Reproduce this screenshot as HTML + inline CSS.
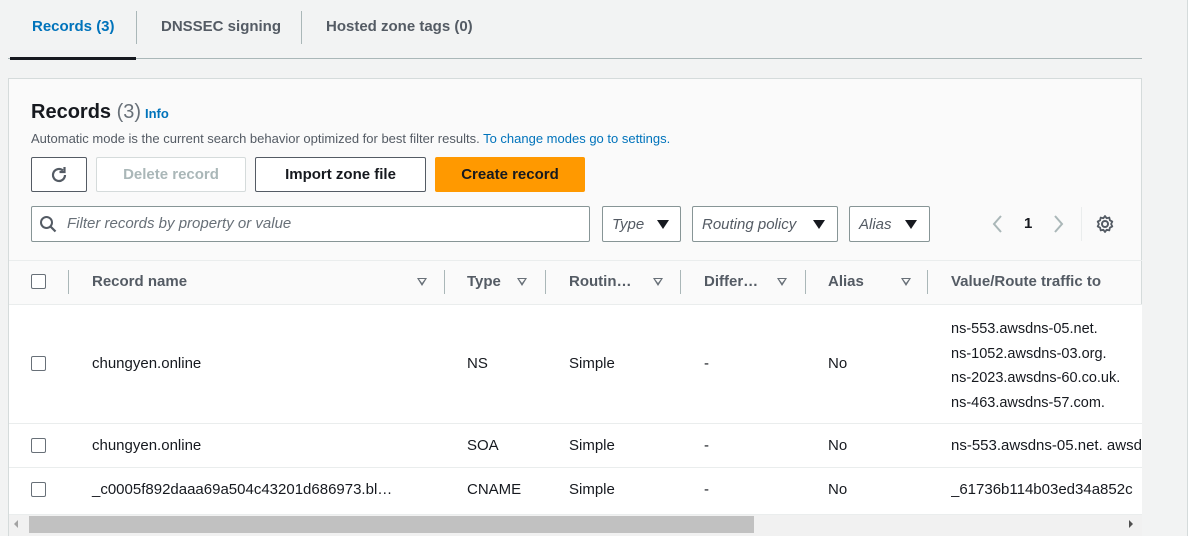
<!DOCTYPE html>
<html><head><style>
*{box-sizing:border-box;margin:0;padding:0}
body{width:1192px;height:536px;overflow:hidden;background:#f2f3f3;font-family:"Liberation Sans",sans-serif;position:relative;color:#16191f}
.a{position:absolute;white-space:nowrap}
.tab{font-size:15px;font-weight:bold;color:#545b64;top:18px}
.btn{position:absolute;top:157px;height:35px;border:1px solid #545b64;border-radius:2px;font-size:15px;font-weight:bold;display:flex;align-items:center;justify-content:center;background:#fff}
.sel{position:absolute;top:206px;height:36px;border:1px solid #879596;border-radius:2px;background:#fff;font-size:15px;font-style:italic;color:#545b64;display:flex;align-items:center;padding-left:9px}
.tri{position:absolute;width:0;height:0;border-left:6px solid transparent;border-right:6px solid transparent;border-top:9px solid #16191f}
.th{position:absolute;top:273px;font-size:15px;font-weight:bold;color:#545b64;white-space:nowrap}
.htri{position:absolute;top:278px;width:0;height:0;border-left:5px solid transparent;border-right:5px solid transparent;border-top:8px solid #687078}
.htri:after{content:"";position:absolute;left:-3px;top:-7px;border-left:3px solid transparent;border-right:3px solid transparent;border-top:4px solid #fafafa}
.sep{position:absolute;top:270px;width:1px;height:24px;background:#aab7b8}
.cb{position:absolute;left:31px;width:15px;height:15px;border:1px solid #687078;border-radius:2px;background:#fff}
.td{position:absolute;font-size:15px;color:#16191f;white-space:nowrap}
.hl{position:absolute;left:9px;width:1133px;height:1px;background:#eaeded}
</style></head><body>
<div class="a tab" style="left:32px;color:#0073bb">Records (3)</div>
<div class="a" style="left:136px;top:11px;width:1px;height:33px;background:#aab7b8"></div>
<div class="a tab" style="left:161px">DNSSEC signing</div>
<div class="a" style="left:301px;top:11px;width:1px;height:33px;background:#aab7b8"></div>
<div class="a tab" style="left:326px">Hosted zone tags (0)</div>
<div class="a" style="left:8px;top:58px;width:1134px;height:1px;background:#aab7b8"></div>
<div class="a" style="left:10px;top:57px;width:126px;height:3px;background:#16191f"></div>

<div class="a" style="left:8px;top:78px;width:1134px;height:458px;background:#fafafa;border:1px solid #d5dbdb;border-bottom:none"></div>
<div class="a" style="left:31px;top:101px;font-size:20px;font-weight:bold">Records <span style="font-weight:normal;color:#687078">(3)</span></div>
<div class="a" style="left:145px;top:106px;font-size:13px;font-weight:bold;color:#0073bb">Info</div>
<div class="a" style="left:31px;top:131px;font-size:13px;color:#545b64">Automatic mode is the current search behavior optimized for best filter results. <span style="color:#0073bb">To change modes go to settings.</span></div>

<div class="btn" style="left:31px;width:56px"><svg width="20" height="20" viewBox="0 0 20 20"><path d="M16 10a6 6 0 1 1-2-4.5" fill="none" stroke="#545b64" stroke-width="2.2"/><path d="M15.5 2v5h-5" fill="none" stroke="#545b64" stroke-width="2.2"/></svg></div>
<div class="btn" style="left:96px;width:150px;border-color:#d5dbdb;color:#aab7b8">Delete record</div>
<div class="btn" style="left:255px;width:171px;color:#16191f">Import zone file</div>
<div class="btn" style="left:435px;width:150px;background:#ff9900;border-color:#ff9900;color:#16191f">Create record</div>

<div class="a" style="left:31px;top:206px;width:559px;height:36px;border:1px solid #879596;border-radius:2px;background:#fff"></div>
<svg class="a" style="left:39px;top:215px" width="18" height="18" viewBox="0 0 18 18"><circle cx="7.5" cy="7.5" r="5.5" fill="none" stroke="#545b64" stroke-width="2"/><path d="M11.5 11.5l5 5" stroke="#545b64" stroke-width="2.2"/></svg>
<div class="a" style="left:67px;top:215px;font-size:15px;font-style:italic;color:#687078">Filter records by property or value</div>
<div class="sel" style="left:602px;width:79px">Type<span class="tri" style="left:54px;top:13px"></span></div>
<div class="sel" style="left:692px;width:146px">Routing policy<span class="tri" style="left:120px;top:13px"></span></div>
<div class="sel" style="left:849px;width:81px">Alias<span class="tri" style="left:55px;top:13px"></span></div>
<svg class="a" style="left:990px;top:214px" width="80" height="20" viewBox="0 0 80 20"><path d="M11 2l-7 8 7 8" fill="none" stroke="#aab7b8" stroke-width="2"/><path d="M65 2l7 8-7 8" fill="none" stroke="#aab7b8" stroke-width="2"/></svg>
<div class="a" style="left:1024px;top:215px;font-size:15px;font-weight:bold">1</div>
<div class="a" style="left:1081px;top:207px;width:1px;height:34px;background:#eaeded"></div>
<svg class="a" style="left:1095px;top:214px" width="20" height="20" viewBox="0 0 20 20"><circle cx="10" cy="10" r="3" fill="none" stroke="#545b64" stroke-width="2"/><path d="M10 2l1.6 2.2 2.7-.6.6 2.7 2.4 1.3-1.2 2.4 1.2 2.4-2.4 1.3-.6 2.7-2.7-.6L10 18l-1.6-2.2-2.7.6-.6-2.7-2.4-1.3L3.9 10 2.7 7.6l2.4-1.3.6-2.7 2.7.6z" fill="none" stroke="#545b64" stroke-width="1.8" stroke-linejoin="round"/></svg>

<div class="hl" style="top:260px"></div>
<div class="cb" style="top:274px"></div>
<div class="sep" style="left:68px"></div>
<div class="th" style="left:92px">Record name</div><span class="htri" style="left:417px"></span>
<div class="sep" style="left:444px"></div>
<div class="th" style="left:467px">Type</div><span class="htri" style="left:517px"></span>
<div class="sep" style="left:545px"></div>
<div class="th" style="left:569px">Routin…</div><span class="htri" style="left:653px"></span>
<div class="sep" style="left:680px"></div>
<div class="th" style="left:704px">Differ…</div><span class="htri" style="left:777px"></span>
<div class="sep" style="left:805px"></div>
<div class="th" style="left:828px">Alias</div><span class="htri" style="left:901px"></span>
<div class="sep" style="left:927px"></div>
<div class="th" style="left:951px">Value/Route traffic to</div>

<div class="a" style="left:9px;top:304px;width:1133px;height:210px;background:#fff"></div>
<div class="hl" style="top:304px"></div>
<div class="cb" style="top:356px"></div>
<div class="td" style="left:92px;top:355px">chungyen.online</div>
<div class="td" style="left:467px;top:355px">NS</div>
<div class="td" style="left:569px;top:355px">Simple</div>
<div class="td" style="left:704px;top:355px">-</div>
<div class="td" style="left:828px;top:355px">No</div>
<div class="td" style="left:951px;top:317px;line-height:24.5px;font-size:14.5px">ns-553.awsdns-05.net.<br>ns-1052.awsdns-03.org.<br>ns-2023.awsdns-60.co.uk.<br>ns-463.awsdns-57.com.</div>
<div class="hl" style="top:423px"></div>
<div class="cb" style="top:438px"></div>
<div class="td" style="left:92px;top:437px">chungyen.online</div>
<div class="td" style="left:467px;top:437px">SOA</div>
<div class="td" style="left:569px;top:437px">Simple</div>
<div class="td" style="left:704px;top:437px">-</div>
<div class="td" style="left:828px;top:437px">No</div>
<div class="td" style="left:951px;top:437px;width:191px;overflow:hidden">ns-553.awsdns-05.net. awsdns</div>
<div class="hl" style="top:467px"></div>
<div class="cb" style="top:482px"></div>
<div class="td" style="left:92px;top:481px">_c0005f892daaa69a504c43201d686973.bl…</div>
<div class="td" style="left:467px;top:481px">CNAME</div>
<div class="td" style="left:569px;top:481px">Simple</div>
<div class="td" style="left:704px;top:481px">-</div>
<div class="td" style="left:828px;top:481px">No</div>
<div class="td" style="left:951px;top:481px;width:191px;overflow:hidden">_61736b114b03ed34a852c</div>

<div class="a" style="left:9px;top:514px;width:1133px;height:22px;background:#f1f1f1;border-top:1px solid #eaeded"></div>
<div class="a" style="left:29px;top:516px;width:725px;height:17px;background:#c1c1c1"></div>
<div class="a" style="left:14px;top:520px;width:0;height:0;border-top:4px solid transparent;border-bottom:4px solid transparent;border-right:4px solid #a3a3a3"></div>
<div class="a" style="left:1129px;top:520px;width:0;height:0;border-top:4px solid transparent;border-bottom:4px solid transparent;border-left:4px solid #505050"></div>
<div class="a" style="left:1187px;top:0;width:1px;height:536px;background:#d5dbdb"></div>
<div class="a" style="left:1188px;top:0;width:4px;height:536px;background:#fff"></div>
</body></html>
